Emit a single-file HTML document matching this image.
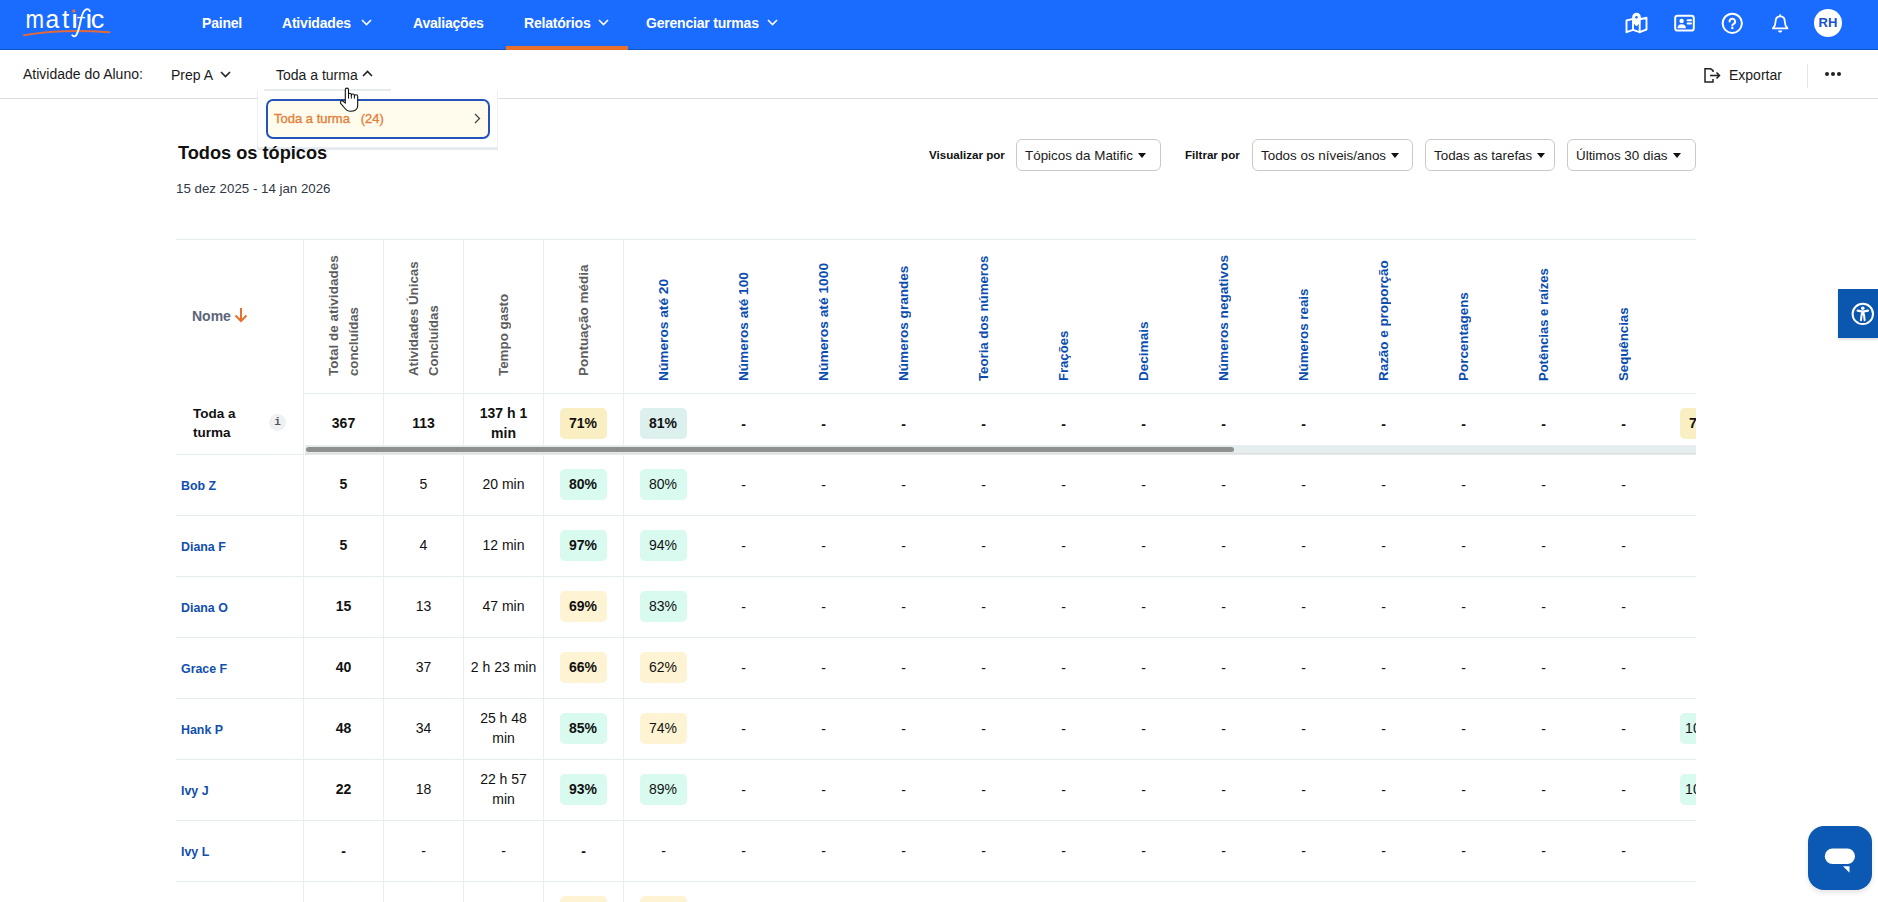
<!DOCTYPE html><html><head><meta charset="utf-8"><style>
*{margin:0;padding:0;box-sizing:border-box}
html,body{width:1878px;height:902px;overflow:hidden;background:#fff;font-family:"Liberation Sans", sans-serif;color:#111}
.a{position:absolute;white-space:nowrap}
#hdr{position:absolute;left:0;top:0;width:1878px;height:50px;background:#1a6bff;border-bottom:1px solid #0f56c4}
.nav{position:absolute;top:15px;font-size:14px;font-weight:bold;color:#fff;letter-spacing:-0.2px}
.sub{font-size:14px;color:#1a1a1a}
.hl{position:absolute;height:1px;background:#e6eeed}
.vl{position:absolute;width:1px;background:#e8efee}
.cell{position:absolute;width:80px;text-align:center;font-size:14px;color:#111}
.b{font-weight:bold}
.badge{position:absolute;width:47px;height:31px;border-radius:5px;text-align:center;line-height:31px;font-size:14px;color:#111}
.g{background:#d8faef} .tg{background:#dcf0ee} .ty{background:#f9efc3}
.y{background:#fef4d3}
.rot{position:absolute;transform-origin:0 0;transform:rotate(-90deg);white-space:nowrap;font-size:13px;font-weight:bold;line-height:20px}
.name{position:absolute;left:181px;font-size:12.4px;font-weight:bold;color:#104fad}
.filt{position:absolute;top:139px;height:32px;border:1px solid #c9c9c9;border-radius:6px;font-size:13.4px;line-height:31px;padding-left:8px;color:#1a1a1a}
.caret{display:inline-block;width:0;height:0;border-left:4.5px solid transparent;border-right:4.5px solid transparent;border-top:5.5px solid #111;margin-left:5px;vertical-align:2px}
</style></head><body>
<div id="hdr"></div>
<svg class="a" style="left:0;top:0" width="130" height="50" viewBox="0 0 130 50" font-family="Liberation Sans, sans-serif" font-size="26" fill="#fff">
<path d="M24 35.2 Q62 28.6 109.5 32.3" stroke="#e26a3a" stroke-width="1.9" fill="none" stroke-linecap="round"/>
<text transform="translate(25.5,28) scale(0.857,1)">m</text>
<text transform="translate(45.55,28) scale(0.95,1)">a</text>
<text transform="translate(61.9,28)">t</text>
<text transform="translate(70.2,28) scale(1.2,1)">ı</text>
<rect x="72.3" y="9.6" width="3" height="2.8" fill="#e8703a"/>
<text transform="translate(84.6,28) scale(1.2,1)">ı</text>
<text transform="translate(90.85,28) scale(1.04,1)">c</text>
<path d="M72.3 35.3 Q73.8 37.4 76.2 35.2 Q78.6 31.5 80.6 21 Q82.6 10.5 86.2 9.3 Q88.8 8.6 89.8 11" stroke="#fff" stroke-width="1.9" fill="none" stroke-linecap="round"/>
<path d="M77.2 17.6 H85.2" stroke="#fff" stroke-width="1.4"/>
</svg>
<div class="nav" style="left:202px">Painel</div>
<div class="nav" style="left:282px">Atividades</div><svg class="a" style="left:361px;top:19px" width="11" height="7" viewBox="0 0 11 7"><path d="M1 1 L5.5 5.5 L10 1" stroke="#fff" stroke-width="1.6" fill="none"/></svg>
<div class="nav" style="left:413px">Avaliações</div>
<div class="nav" style="left:524px">Relatórios</div><svg class="a" style="left:598px;top:19px" width="11" height="7" viewBox="0 0 11 7"><path d="M1 1 L5.5 5.5 L10 1" stroke="#fff" stroke-width="1.6" fill="none"/></svg>
<div class="a" style="left:506px;top:46px;width:122px;height:4px;background:#e8702a"></div>
<div class="nav" style="left:646px">Gerenciar turmas</div><svg class="a" style="left:767px;top:19px" width="11" height="7" viewBox="0 0 11 7"><path d="M1 1 L5.5 5.5 L10 1" stroke="#fff" stroke-width="1.6" fill="none"/></svg>
<svg class="a" style="left:1600px;top:0" width="200" height="50" viewBox="1600 0 200 50">
<g stroke="#fff" stroke-width="1.9" fill="none" stroke-linejoin="round" stroke-linecap="round">
<path d="M1633 18.9 L1626.5 20.5 V32.2 L1633 29.9 L1639.7 32.2 L1646.5 29.5 V17.8 L1640 19.2"/>
<path d="M1633 20 V29.9 M1639.7 20 V32.2"/>
<path d="M1633.2 21.5 L1636.5 25 L1639.6 21.5"/>
</g>
<path d="M1636.5 12.8 A4.4 4.4 0 0 1 1640.9 17.2 C1640.9 20 1636.5 25.2 1636.5 25.2 C1636.5 25.2 1632.1 20 1632.1 17.2 A4.4 4.4 0 0 1 1636.5 12.8 Z" fill="#fff"/>
<circle cx="1636.5" cy="17.3" r="1.3" fill="#1a6bff"/>
<rect x="1675.2" y="15.8" width="18.6" height="14.8" rx="2.4" stroke="#fff" stroke-width="2" fill="none"/>
<circle cx="1681.6" cy="20.9" r="2.2" fill="#fff"/>
<path d="M1677.5 28.2 Q1677.5 24.2 1681.7 24.2 Q1685.9 24.2 1685.9 28.2 Z" fill="#fff"/>
<path d="M1687.6 20.3 H1691 M1687.6 23.5 H1691" stroke="#fff" stroke-width="1.9" stroke-linecap="round"/>
<circle cx="1732.3" cy="23.3" r="9.6" stroke="#fff" stroke-width="2" fill="none"/>
<path d="M1729.6 21.6 A2.75 2.75 0 1 1 1733.4 24.1 C1732.6 24.5 1732.3 24.9 1732.3 25.6" stroke="#fff" stroke-width="2" fill="none" stroke-linecap="round"/>
<circle cx="1732.3" cy="27.9" r="1.25" fill="#fff"/>
<path d="M1780.2 16.3 C1777 16.3 1775.6 18.8 1775.6 21.6 C1775.6 25 1774.6 26.6 1772.9 28.4 H1787.5 C1785.8 26.6 1784.8 25 1784.8 21.6 C1784.8 18.8 1783.4 16.3 1780.2 16.3 Z" stroke="#fff" stroke-width="1.8" fill="none" stroke-linejoin="round"/>
<circle cx="1780.2" cy="15.3" r="1.1" fill="#fff"/>
<path d="M1778.1 30.6 H1782.3 A2.1 2.1 0 0 1 1778.1 30.6 Z" fill="#fff"/>
</svg>
<div class="a" style="left:1814px;top:9px;width:28px;height:28px;border-radius:50%;background:#fff;color:#1550c8;font-size:13px;font-weight:bold;text-align:center;line-height:28px">RH</div>
<div class="hl" style="left:0;top:98px;width:1878px;background:#dedede"></div>
<div class="a sub" style="left:23px;top:66px">Atividade do Aluno:</div>
<div class="a sub" style="left:171px;top:67px">Prep A</div><svg class="a" style="left:220px;top:71px" width="11" height="7" viewBox="0 0 11 7"><path d="M1 1 L5.5 5.5 L10 1" stroke="#222" stroke-width="1.6" fill="none"/></svg>
<div class="a sub" style="left:276px;top:67px">Toda a turma</div><svg class="a" style="left:362px;top:70px" width="11" height="7" viewBox="0 0 11 7"><path d="M1 6 L5.5 1.5 L10 6" stroke="#222" stroke-width="1.6" fill="none"/></svg>
<div class="a" style="left:1704px;top:68px"><svg width="17" height="15" viewBox="0 0 17 15"><path d="M9 4 V2.5 L6.5 0.8 H1 V14 H9 V11" stroke="#222" stroke-width="1.5" fill="none"/><path d="M6 7.5 H15.5 M12.5 4.5 L15.5 7.5 L12.5 10.5" stroke="#222" stroke-width="1.5" fill="none"/></svg></div>
<div class="a sub" style="left:1729px;top:67px">Exportar</div>
<div class="a" style="left:1807px;top:64px;width:1px;height:24px;background:#e6e6e6"></div>
<div class="a" style="left:1825px;top:72px;width:4px;height:4px;border-radius:50%;background:#222"></div>
<div class="a" style="left:1831px;top:72px;width:4px;height:4px;border-radius:50%;background:#222"></div>
<div class="a" style="left:1837px;top:72px;width:4px;height:4px;border-radius:50%;background:#222"></div>
<div class="a" style="left:264px;top:89px;width:127px;height:2px;background:#e6ebed"></div>
<div class="a" style="left:257px;top:91px;width:241px;height:57px;background:#fff;border:1px solid #edf0f2;border-top:none;box-shadow:0 2px 0 #e3e9ec"></div>
<div class="a" style="left:266px;top:99px;width:224px;height:40px;border:2px solid #2353b8;border-radius:7px;background:#fffcee"></div>
<div class="a" style="left:274px;top:111px;font-size:13px;color:#e47f38;-webkit-text-stroke:0.35px #e47f38">Toda a turma&nbsp;&nbsp;&nbsp;(24)</div>
<svg class="a" style="left:474px;top:113px" width="7" height="11" viewBox="0 0 7 11"><path d="M1 1 L5.5 5.5 L1 10" stroke="#444" stroke-width="1.3" fill="none"/></svg>
<div class="a" style="left:178px;top:143px;font-size:18.2px;font-weight:bold;color:#111">Todos os tópicos</div>
<div class="a" style="left:176px;top:181px;font-size:13.3px;color:#2f3846">15 dez 2025 - 14 jan 2026</div>
<div class="a" style="left:929px;top:148px;font-size:11.6px;font-weight:bold;color:#111">Visualizar por</div>
<div class="filt" style="left:1016px;width:145px">Tópicos da Matific<span class="caret"></span></div>
<div class="a" style="left:1185px;top:148px;font-size:11.6px;font-weight:bold;color:#111">Filtrar por</div>
<div class="filt" style="left:1252px;width:161px">Todos os níveis/anos<span class="caret"></span></div>
<div class="filt" style="left:1425px;width:130px">Todas as tarefas<span class="caret"></span></div>
<div class="filt" style="left:1567px;width:129px">Últimos 30 dias<span class="caret"></span></div>
<div class="a" style="left:0;top:0;width:1696px;height:902px;overflow:hidden">
<div class="hl" style="left:176px;top:239px;width:1520px"></div>
<div class="hl" style="left:303px;top:393px;width:1393px"></div>
<div class="hl" style="left:176px;top:454px;width:1520px"></div>
<div class="hl" style="left:176px;top:515px;width:1520px"></div>
<div class="hl" style="left:176px;top:576px;width:1520px"></div>
<div class="hl" style="left:176px;top:637px;width:1520px"></div>
<div class="hl" style="left:176px;top:698px;width:1520px"></div>
<div class="hl" style="left:176px;top:759px;width:1520px"></div>
<div class="hl" style="left:176px;top:820px;width:1520px"></div>
<div class="hl" style="left:176px;top:881px;width:1520px"></div>
<div class="vl" style="left:303px;top:239px;height:663px"></div>
<div class="vl" style="left:383px;top:239px;height:663px"></div>
<div class="vl" style="left:463px;top:239px;height:663px"></div>
<div class="vl" style="left:543px;top:239px;height:663px"></div>
<div class="vl" style="left:623px;top:239px;height:663px"></div>
<div class="a" style="left:192px;top:308px;font-size:14px;font-weight:bold;color:#5b6577">Nome</div>
<svg class="a" style="left:234px;top:307px" width="14" height="16" viewBox="0 0 14 16"><path d="M7 1 V14 M1.5 8.5 L7 14 L12.5 8.5" stroke="#e8702a" stroke-width="2" fill="none"/></svg>
<div class="rot" style="left:323.5px;top:376px;color:#5d5d5d;font-size:13.5px"><div style="transform-origin:0 50%;transform:scaleX(1.0014)">Total de atividades</div><div style="transform-origin:0 50%;transform:scaleX(0.9769)">concluídas</div></div>
<div class="rot" style="left:403.5px;top:376px;color:#5d5d5d;font-size:13.5px"><div style="transform-origin:0 50%;transform:scaleX(0.9854)">Atividades Únicas</div><div style="transform-origin:0 50%;transform:scaleX(0.9716)">Concluídas</div></div>
<div class="rot" style="left:493.5px;top:376px;color:#5d5d5d;font-size:13.5px"><div style="transform-origin:0 50%;transform:scaleX(0.9902)">Tempo gasto</div></div>
<div class="rot" style="left:573.5px;top:376px;color:#5d5d5d;font-size:13.5px"><div style="transform-origin:0 50%;transform:scaleX(0.9966)">Pontuação média</div></div>
<div class="rot" style="left:653.5px;top:381px;color:#0b4dae;font-size:13.5px"><div style="transform-origin:0 50%;transform:scaleX(1.0154)">Números até 20</div></div>
<div class="rot" style="left:733.5px;top:381px;color:#0b4dae;font-size:13.5px"><div style="transform-origin:0 50%;transform:scaleX(1.0068)">Números até 100</div></div>
<div class="rot" style="left:813.5px;top:381px;color:#0b4dae;font-size:13.5px"><div style="transform-origin:0 50%;transform:scaleX(1.0220)">Números até 1000</div></div>
<div class="rot" style="left:893.5px;top:381px;color:#0b4dae;font-size:13.5px"><div style="transform-origin:0 50%;transform:scaleX(1.0053)">Números grandes</div></div>
<div class="rot" style="left:973.5px;top:381px;color:#0b4dae;font-size:13.5px"><div style="transform-origin:0 50%;transform:scaleX(0.9787)">Teoria dos números</div></div>
<div class="rot" style="left:1053.5px;top:381px;color:#0b4dae;font-size:13.5px"><div style="transform-origin:0 50%;transform:scaleX(0.9695)">Frações</div></div>
<div class="rot" style="left:1133.5px;top:381px;color:#0b4dae;font-size:13.5px"><div style="transform-origin:0 50%;transform:scaleX(1.0034)">Decimais</div></div>
<div class="rot" style="left:1213.5px;top:381px;color:#0b4dae;font-size:13.5px"><div style="transform-origin:0 50%;transform:scaleX(1.0056)">Números negativos</div></div>
<div class="rot" style="left:1293.5px;top:381px;color:#0b4dae;font-size:13.5px"><div style="transform-origin:0 50%;transform:scaleX(0.9851)">Números reais</div></div>
<div class="rot" style="left:1373.5px;top:381px;color:#0b4dae;font-size:13.5px"><div style="transform-origin:0 50%;transform:scaleX(0.9932)">Razão e proporção</div></div>
<div class="rot" style="left:1453.5px;top:381px;color:#0b4dae;font-size:13.5px"><div style="transform-origin:0 50%;transform:scaleX(0.9946)">Porcentagens</div></div>
<div class="rot" style="left:1533.5px;top:381px;color:#0b4dae;font-size:13.5px"><div style="transform-origin:0 50%;transform:scaleX(0.9635)">Potências e raízes</div></div>
<div class="rot" style="left:1613.5px;top:381px;color:#0b4dae;font-size:13.5px"><div style="transform-origin:0 50%;transform:scaleX(0.9807)">Sequências</div></div>
<div class="a" style="left:193px;top:404px;font-size:13.5px;font-weight:bold;line-height:19px;color:#111">Toda a<br>turma</div>
<div class="a" style="left:269px;top:414px;width:17px;height:17px;border-radius:50%;background:#eef1f4;font-size:11px;font-weight:bold;color:#555;text-align:center;line-height:17px;font-family:'Liberation Mono',monospace">i</div>
<div class="cell b" style="left:303.5px;top:413px;line-height:20px">367</div>
<div class="cell b" style="left:383.5px;top:413px;line-height:20px">113</div>
<div class="cell b" style="left:463.5px;top:403px;line-height:20px">137 h 1<br>min</div>
<div class="badge ty b" style="left:559.5px;top:407.5px">71%</div>
<div class="badge tg b" style="left:639.5px;top:407.5px">81%</div>
<div class="cell b" style="left:703.5px;top:414px;line-height:20px">-</div>
<div class="cell b" style="left:783.5px;top:414px;line-height:20px">-</div>
<div class="cell b" style="left:863.5px;top:414px;line-height:20px">-</div>
<div class="cell b" style="left:943.5px;top:414px;line-height:20px">-</div>
<div class="cell b" style="left:1023.5px;top:414px;line-height:20px">-</div>
<div class="cell b" style="left:1103.5px;top:414px;line-height:20px">-</div>
<div class="cell b" style="left:1183.5px;top:414px;line-height:20px">-</div>
<div class="cell b" style="left:1263.5px;top:414px;line-height:20px">-</div>
<div class="cell b" style="left:1343.5px;top:414px;line-height:20px">-</div>
<div class="cell b" style="left:1423.5px;top:414px;line-height:20px">-</div>
<div class="cell b" style="left:1503.5px;top:414px;line-height:20px">-</div>
<div class="cell b" style="left:1583.5px;top:414px;line-height:20px">-</div>
<div class="badge ty b" style="left:1679.5px;top:407.5px">71%</div>
<div class="a" style="left:305px;top:445px;width:1391px;height:9px;background:#e6edef;border-bottom:1px solid #dcdcdc"></div>
<div class="a" style="left:306px;top:447px;width:928px;height:5px;border-radius:3px;background:#8e9090"></div>
<div class="name" style="top:477px;line-height:18px">Bob Z</div>
<div class="cell b" style="left:303.5px;top:474px;line-height:20px">5</div>
<div class="cell" style="left:383.5px;top:474px;line-height:20px">5</div>
<div class="cell" style="left:463.5px;top:474px;line-height:20px">20 min</div>
<div class="badge g b" style="left:559.5px;top:468.5px">80%</div>
<div class="badge g" style="left:639.5px;top:468.5px">80%</div>
<div class="cell" style="left:703.5px;top:475px;line-height:20px">-</div>
<div class="cell" style="left:783.5px;top:475px;line-height:20px">-</div>
<div class="cell" style="left:863.5px;top:475px;line-height:20px">-</div>
<div class="cell" style="left:943.5px;top:475px;line-height:20px">-</div>
<div class="cell" style="left:1023.5px;top:475px;line-height:20px">-</div>
<div class="cell" style="left:1103.5px;top:475px;line-height:20px">-</div>
<div class="cell" style="left:1183.5px;top:475px;line-height:20px">-</div>
<div class="cell" style="left:1263.5px;top:475px;line-height:20px">-</div>
<div class="cell" style="left:1343.5px;top:475px;line-height:20px">-</div>
<div class="cell" style="left:1423.5px;top:475px;line-height:20px">-</div>
<div class="cell" style="left:1503.5px;top:475px;line-height:20px">-</div>
<div class="cell" style="left:1583.5px;top:475px;line-height:20px">-</div>
<div class="name" style="top:538px;line-height:18px">Diana F</div>
<div class="cell b" style="left:303.5px;top:535px;line-height:20px">5</div>
<div class="cell" style="left:383.5px;top:535px;line-height:20px">4</div>
<div class="cell" style="left:463.5px;top:535px;line-height:20px">12 min</div>
<div class="badge g b" style="left:559.5px;top:529.5px">97%</div>
<div class="badge g" style="left:639.5px;top:529.5px">94%</div>
<div class="cell" style="left:703.5px;top:536px;line-height:20px">-</div>
<div class="cell" style="left:783.5px;top:536px;line-height:20px">-</div>
<div class="cell" style="left:863.5px;top:536px;line-height:20px">-</div>
<div class="cell" style="left:943.5px;top:536px;line-height:20px">-</div>
<div class="cell" style="left:1023.5px;top:536px;line-height:20px">-</div>
<div class="cell" style="left:1103.5px;top:536px;line-height:20px">-</div>
<div class="cell" style="left:1183.5px;top:536px;line-height:20px">-</div>
<div class="cell" style="left:1263.5px;top:536px;line-height:20px">-</div>
<div class="cell" style="left:1343.5px;top:536px;line-height:20px">-</div>
<div class="cell" style="left:1423.5px;top:536px;line-height:20px">-</div>
<div class="cell" style="left:1503.5px;top:536px;line-height:20px">-</div>
<div class="cell" style="left:1583.5px;top:536px;line-height:20px">-</div>
<div class="name" style="top:599px;line-height:18px">Diana O</div>
<div class="cell b" style="left:303.5px;top:596px;line-height:20px">15</div>
<div class="cell" style="left:383.5px;top:596px;line-height:20px">13</div>
<div class="cell" style="left:463.5px;top:596px;line-height:20px">47 min</div>
<div class="badge y b" style="left:559.5px;top:590.5px">69%</div>
<div class="badge g" style="left:639.5px;top:590.5px">83%</div>
<div class="cell" style="left:703.5px;top:597px;line-height:20px">-</div>
<div class="cell" style="left:783.5px;top:597px;line-height:20px">-</div>
<div class="cell" style="left:863.5px;top:597px;line-height:20px">-</div>
<div class="cell" style="left:943.5px;top:597px;line-height:20px">-</div>
<div class="cell" style="left:1023.5px;top:597px;line-height:20px">-</div>
<div class="cell" style="left:1103.5px;top:597px;line-height:20px">-</div>
<div class="cell" style="left:1183.5px;top:597px;line-height:20px">-</div>
<div class="cell" style="left:1263.5px;top:597px;line-height:20px">-</div>
<div class="cell" style="left:1343.5px;top:597px;line-height:20px">-</div>
<div class="cell" style="left:1423.5px;top:597px;line-height:20px">-</div>
<div class="cell" style="left:1503.5px;top:597px;line-height:20px">-</div>
<div class="cell" style="left:1583.5px;top:597px;line-height:20px">-</div>
<div class="name" style="top:660px;line-height:18px">Grace F</div>
<div class="cell b" style="left:303.5px;top:657px;line-height:20px">40</div>
<div class="cell" style="left:383.5px;top:657px;line-height:20px">37</div>
<div class="cell" style="left:463.5px;top:657px;line-height:20px">2 h 23 min</div>
<div class="badge y b" style="left:559.5px;top:651.5px">66%</div>
<div class="badge y" style="left:639.5px;top:651.5px">62%</div>
<div class="cell" style="left:703.5px;top:658px;line-height:20px">-</div>
<div class="cell" style="left:783.5px;top:658px;line-height:20px">-</div>
<div class="cell" style="left:863.5px;top:658px;line-height:20px">-</div>
<div class="cell" style="left:943.5px;top:658px;line-height:20px">-</div>
<div class="cell" style="left:1023.5px;top:658px;line-height:20px">-</div>
<div class="cell" style="left:1103.5px;top:658px;line-height:20px">-</div>
<div class="cell" style="left:1183.5px;top:658px;line-height:20px">-</div>
<div class="cell" style="left:1263.5px;top:658px;line-height:20px">-</div>
<div class="cell" style="left:1343.5px;top:658px;line-height:20px">-</div>
<div class="cell" style="left:1423.5px;top:658px;line-height:20px">-</div>
<div class="cell" style="left:1503.5px;top:658px;line-height:20px">-</div>
<div class="cell" style="left:1583.5px;top:658px;line-height:20px">-</div>
<div class="name" style="top:721px;line-height:18px">Hank P</div>
<div class="cell b" style="left:303.5px;top:718px;line-height:20px">48</div>
<div class="cell" style="left:383.5px;top:718px;line-height:20px">34</div>
<div class="cell" style="left:463.5px;top:708px;line-height:20px">25 h 48<br>min</div>
<div class="badge g b" style="left:559.5px;top:712.5px">85%</div>
<div class="badge y" style="left:639.5px;top:712.5px">74%</div>
<div class="cell" style="left:703.5px;top:719px;line-height:20px">-</div>
<div class="cell" style="left:783.5px;top:719px;line-height:20px">-</div>
<div class="cell" style="left:863.5px;top:719px;line-height:20px">-</div>
<div class="cell" style="left:943.5px;top:719px;line-height:20px">-</div>
<div class="cell" style="left:1023.5px;top:719px;line-height:20px">-</div>
<div class="cell" style="left:1103.5px;top:719px;line-height:20px">-</div>
<div class="cell" style="left:1183.5px;top:719px;line-height:20px">-</div>
<div class="cell" style="left:1263.5px;top:719px;line-height:20px">-</div>
<div class="cell" style="left:1343.5px;top:719px;line-height:20px">-</div>
<div class="cell" style="left:1423.5px;top:719px;line-height:20px">-</div>
<div class="cell" style="left:1503.5px;top:719px;line-height:20px">-</div>
<div class="cell" style="left:1583.5px;top:719px;line-height:20px">-</div>
<div class="badge g" style="left:1679.5px;top:712.5px">100%</div>
<div class="name" style="top:782px;line-height:18px">Ivy J</div>
<div class="cell b" style="left:303.5px;top:779px;line-height:20px">22</div>
<div class="cell" style="left:383.5px;top:779px;line-height:20px">18</div>
<div class="cell" style="left:463.5px;top:769px;line-height:20px">22 h 57<br>min</div>
<div class="badge g b" style="left:559.5px;top:773.5px">93%</div>
<div class="badge g" style="left:639.5px;top:773.5px">89%</div>
<div class="cell" style="left:703.5px;top:780px;line-height:20px">-</div>
<div class="cell" style="left:783.5px;top:780px;line-height:20px">-</div>
<div class="cell" style="left:863.5px;top:780px;line-height:20px">-</div>
<div class="cell" style="left:943.5px;top:780px;line-height:20px">-</div>
<div class="cell" style="left:1023.5px;top:780px;line-height:20px">-</div>
<div class="cell" style="left:1103.5px;top:780px;line-height:20px">-</div>
<div class="cell" style="left:1183.5px;top:780px;line-height:20px">-</div>
<div class="cell" style="left:1263.5px;top:780px;line-height:20px">-</div>
<div class="cell" style="left:1343.5px;top:780px;line-height:20px">-</div>
<div class="cell" style="left:1423.5px;top:780px;line-height:20px">-</div>
<div class="cell" style="left:1503.5px;top:780px;line-height:20px">-</div>
<div class="cell" style="left:1583.5px;top:780px;line-height:20px">-</div>
<div class="badge g" style="left:1679.5px;top:773.5px">100%</div>
<div class="name" style="top:843px;line-height:18px">Ivy L</div>
<div class="cell b" style="left:303.5px;top:841px;line-height:20px">-</div>
<div class="cell" style="left:383.5px;top:841px;line-height:20px">-</div>
<div class="cell" style="left:463.5px;top:841px;line-height:20px">-</div>
<div class="cell b" style="left:543.5px;top:841px;line-height:20px">-</div>
<div class="cell" style="left:623.5px;top:841px;line-height:20px">-</div>
<div class="cell" style="left:703.5px;top:841px;line-height:20px">-</div>
<div class="cell" style="left:783.5px;top:841px;line-height:20px">-</div>
<div class="cell" style="left:863.5px;top:841px;line-height:20px">-</div>
<div class="cell" style="left:943.5px;top:841px;line-height:20px">-</div>
<div class="cell" style="left:1023.5px;top:841px;line-height:20px">-</div>
<div class="cell" style="left:1103.5px;top:841px;line-height:20px">-</div>
<div class="cell" style="left:1183.5px;top:841px;line-height:20px">-</div>
<div class="cell" style="left:1263.5px;top:841px;line-height:20px">-</div>
<div class="cell" style="left:1343.5px;top:841px;line-height:20px">-</div>
<div class="cell" style="left:1423.5px;top:841px;line-height:20px">-</div>
<div class="cell" style="left:1503.5px;top:841px;line-height:20px">-</div>
<div class="cell" style="left:1583.5px;top:841px;line-height:20px">-</div>
<div class="badge y b" style="left:559.5px;top:895.5px">70%</div>
<div class="badge y" style="left:639.5px;top:895.5px">70%</div>
</div>
<div class="a" style="left:1838px;top:289px;width:40px;height:49px;background:#0b56ae;box-shadow:0 2px 2px rgba(0,0,0,0.12)"></div>
<svg class="a" style="left:1838px;top:289px" width="40" height="50" viewBox="1838 289 40 50">
<circle cx="1862.8" cy="313.9" r="10.2" stroke="#fff" stroke-width="2" fill="none"/>
<circle cx="1862.8" cy="308.3" r="1.8" fill="#fff"/>
<path d="M1857.6 310.6 L1862.8 311.6 L1868 310.6" stroke="#fff" stroke-width="2.1" fill="none" stroke-linecap="round" stroke-linejoin="round"/>
<path d="M1862.8 311.5 V315.2" stroke="#fff" stroke-width="3.2"/>
<path d="M1861.6 314.6 L1861 320.2 M1864 314.6 L1864.6 320.2" stroke="#fff" stroke-width="2" stroke-linecap="round"/>
</svg>
<div class="a" style="left:1808px;top:826px;width:64px;height:64px;border-radius:16px;background:#0b59b2;box-shadow:0 3px 5px rgba(0,0,0,0.10)"></div>
<svg class="a" style="left:1808px;top:826px" width="64" height="64" viewBox="1808 826 64 64">
<rect x="1824.8" y="848.6" width="30.2" height="15.4" rx="7.7" fill="#fff"/>
<path d="M1843 866.3 L1849.5 866.3 L1849.5 872.8 Z" fill="#fff"/>
</svg>
<svg class="a" style="left:339px;top:87px" width="21" height="26" viewBox="0 0 21 26">
<path d="M6.3 15 V2.7 A1.6 1.6 0 0 1 9.5 2.7 V7.6 A1.4 1.4 0 0 1 12.3 7.6 V8.5 A1.55 1.55 0 0 1 15.4 8.5 V9.4 A1.65 1.65 0 0 1 18.7 9.4 V18.5 Q18.7 24.3 11 24.3 Q8 24.3 6 21.5 L1.7 16.4 A1.5 1.5 0 0 1 4.2 14.4 L6.3 16.2 Z" fill="#fff" stroke="#111" stroke-width="1.1" stroke-linejoin="round"/>
<path d="M9.5 7.6 V11.6 M12.3 8.5 V11.6 M15.4 9.4 V11.6" stroke="#111" stroke-width="1"/>
</svg>
</body></html>
